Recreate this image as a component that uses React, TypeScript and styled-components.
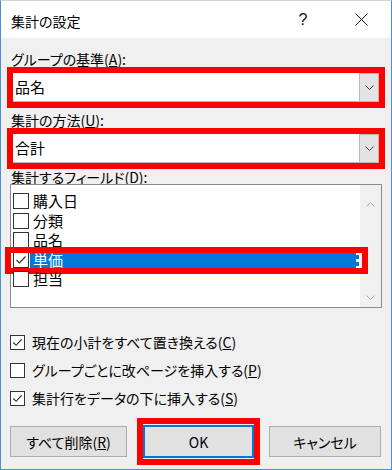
import React from 'react';
import styled, { createGlobalStyle } from 'styled-components';

const GlobalStyle = createGlobalStyle`
  html, body {
    margin: 0;
    padding: 0;
    background: #ffffff;
  }
  * {
    box-sizing: border-box;
  }
`;

const Dialog = styled.div`
  width: 392px;
  height: 470px;
  display: flex;
  flex-direction: column;
  border: 1px solid #4a8fd9;
  border-top-color: #d4d4d4;
  background: #f0f0f0;
  color: #000;
  font-family: 'Noto Sans CJK JP', 'Noto Sans', sans-serif;
  font-feature-settings: 'palt';
`;

const TitleBar = styled.div`
  height: 37px;
  flex: none;
  display: flex;
  align-items: center;
  padding-left: 10px;
  background: #ffffff;
`;

const Title = styled.div`
  flex: 1;
  font-size: 14px;
  line-height: 16px;
  margin-top: 3px;
`;

const TitleButton = styled.div<{ $w: number }>`
  width: ${(p) => p.$w}px;
  height: 37px;
  display: flex;
  align-items: center;
  justify-content: center;
  font-family: 'Liberation Sans', sans-serif;
  font-size: 16px;
  color: #111;
`;

const Body = styled.div`
  flex: 1;
  display: flex;
  flex-direction: column;
  padding: 0 6px;
`;

const Label = styled.div<{ $mt: number }>`
  margin-top: ${(p) => p.$mt}px;
  margin-left: 4px;
  height: 16px;
  font-size: 14px;
  line-height: 16px;
  white-space: nowrap;
`;

const RedFrame = styled.div`
  border: 6px solid #ff0000;
`;

const ComboFrame = styled(RedFrame)`
  height: 41px;
`;

const Combo = styled.div`
  height: 100%;
  display: flex;
  background: #ffffff;
  border-bottom: 1px solid #b9b9b9;
`;

const ComboText = styled.div`
  flex: 1;
  padding-left: 2px;
  font-size: 15px;
  line-height: 28px;
`;

const DropButton = styled.div`
  width: 20px;
  display: flex;
  align-items: center;
  justify-content: center;
  background: #e3e3e3;
  border: 1px solid #b9b9b9;
  border-bottom: none;
`;

const ListBox = styled.div`
  margin: -1px 3px 0 3px;
  height: 124px;
  display: flex;
  background: #ffffff;
  border: 1px solid #8c8c8c;
`;

const Items = styled.div`
  flex: 1;
  padding-top: 8px;
`;

const Row = styled.div`
  position: relative;
  height: 19.5px;
  display: flex;
  align-items: flex-start;
  padding-left: 2px;
`;

const RowText = styled.div<{ $selected?: boolean }>`
  height: 17px;
  margin-left: 1px;
  padding: 0 3px;
  font-size: 15px;
  line-height: 16px;
  white-space: nowrap;
  ${(p) =>
    p.$selected
      ? `
    flex: 1;
    margin-right: 1px;
    background: #0078d7;
    color: #ffffff;
    border-right: 3px dotted #ffffff;
  `
      : ''}
`;

const RowMark = styled.div`
  position: absolute;
  top: -5px;
  left: -6px;
  right: -8px;
  bottom: -3px;
  border: 6px solid #ff0000;
  pointer-events: none;
`;

const ScrollBar = styled.div`
  width: 21px;
  display: flex;
  flex-direction: column;
  justify-content: space-between;
  align-items: center;
  padding: 17px 0 7px;
  background: #f0f0f0;
`;

const Box = styled.div<{ $size: number }>`
  width: ${(p) => p.$size}px;
  height: ${(p) => p.$size}px;
  flex: none;
  background: #ffffff;
  border: 1px solid #333333;
  display: flex;
  align-items: center;
  justify-content: center;
`;

const Options = styled.div`
  margin-top: 20px;
  display: flex;
  flex-direction: column;
`;

const OptionRow = styled.div`
  height: 28px;
  display: flex;
  align-items: center;
  padding-left: 3px;
  gap: 7px;
  font-size: 14px;
  line-height: 16px;
  white-space: nowrap;
`;

const ButtonRow = styled.div`
  margin-top: 6px;
  height: 47px;
  display: flex;
  align-items: center;
  padding-left: 3px;
`;

const Button = styled.div<{ $w: number; $default?: boolean }>`
  width: ${(p) => p.$w}px;
  height: ${(p) => (p.$default ? 33 : 31)}px;
  display: flex;
  align-items: center;
  justify-content: center;
  background: #e1e1e1;
  border: ${(p) => (p.$default ? '2px solid #0078d7' : '1px solid #adadad')};
  font-size: 14px;
  white-space: nowrap;
`;

const OkFrame = styled(RedFrame)`
  margin: 0 9px 0 10px;
  padding: 1px 0;
`;

const Check = ({ size }: { size: number }) => (
  <svg width={size - 2} height={size - 2} viewBox="0 0 14 14">
    <polyline points="2.5,7 5.5,10 11.5,3.5" fill="none" stroke="#333" strokeWidth="1.2" />
  </svg>
);

const CheckBox = ({ checked, size }: { checked?: boolean; size: number }) => (
  <Box $size={size}>{checked && <Check size={size} />}</Box>
);

const Chevron = ({ color = '#444', up }: { color?: string; up?: boolean }) => (
  <svg width="9" height="5" viewBox="0 0 9 5">
    <polyline
      points={up ? '0.5,4.5 4.5,0.5 8.5,4.5' : '0.5,0.5 4.5,4.5 8.5,0.5'}
      fill="none"
      stroke={color}
      strokeWidth="1"
    />
  </svg>
);

const fields = [
  { name: '購入日', checked: false },
  { name: '分類', checked: false },
  { name: '品名', checked: false },
  { name: '単価', checked: true },
  { name: '担当', checked: false },
];

const App = () => (
  <>
    <GlobalStyle />
    <Dialog>
      <TitleBar>
        <Title>集計の設定</Title>
        <TitleButton $w={56}>?</TitleButton>
        <TitleButton $w={60}>
          <svg width="13" height="13" viewBox="0 0 13 13">
            <path d="M0.5 0.5 L12.5 12.5 M12.5 0.5 L0.5 12.5" stroke="#111" strokeWidth="1" />
          </svg>
        </TitleButton>
      </TitleBar>

      <Body>
        <Label $mt={13}>
          グループの基準(<u>A</u>):
        </Label>
        <ComboFrame>
          <Combo>
            <ComboText>品名</ComboText>
            <DropButton>
              <Chevron />
            </DropButton>
          </Combo>
        </ComboFrame>

        <Label $mt={4}>
          集計の方法(<u>U</u>):
        </Label>
        <ComboFrame>
          <Combo>
            <ComboText>合計</ComboText>
            <DropButton>
              <Chevron />
            </DropButton>
          </Combo>
        </ComboFrame>

        <Label $mt={0}>
          集計するフィールド(<u>D</u>):
        </Label>
        <ListBox>
          <Items>
            {fields.map((f) => (
              <Row key={f.name}>
                <CheckBox checked={f.checked} size={16} />
                <RowText $selected={f.checked}>{f.name}</RowText>
                {f.checked && <RowMark />}
              </Row>
            ))}
          </Items>
          <ScrollBar>
            <Chevron up color="#a6a6a6" />
            <Chevron color="#a6a6a6" />
          </ScrollBar>
        </ListBox>

        <Options>
          <OptionRow>
            <CheckBox checked size={15} />
            <span>
              現在の小計をすべて置き換える(<u>C</u>)
            </span>
          </OptionRow>
          <OptionRow>
            <CheckBox size={15} />
            <span>
              グループごとに改ページを挿入する(<u>P</u>)
            </span>
          </OptionRow>
          <OptionRow>
            <CheckBox checked size={15} />
            <span>
              集計行をデータの下に挿入する(<u>S</u>)
            </span>
          </OptionRow>
        </Options>

        <ButtonRow>
          <Button $w={117}>
            すべて削除(<u>R</u>)
          </Button>
          <OkFrame>
            <Button $w={111} $default>
              OK
            </Button>
          </OkFrame>
          <Button $w={112}>キャンセル</Button>
        </ButtonRow>
      </Body>
    </Dialog>
  </>
);

export default App;
